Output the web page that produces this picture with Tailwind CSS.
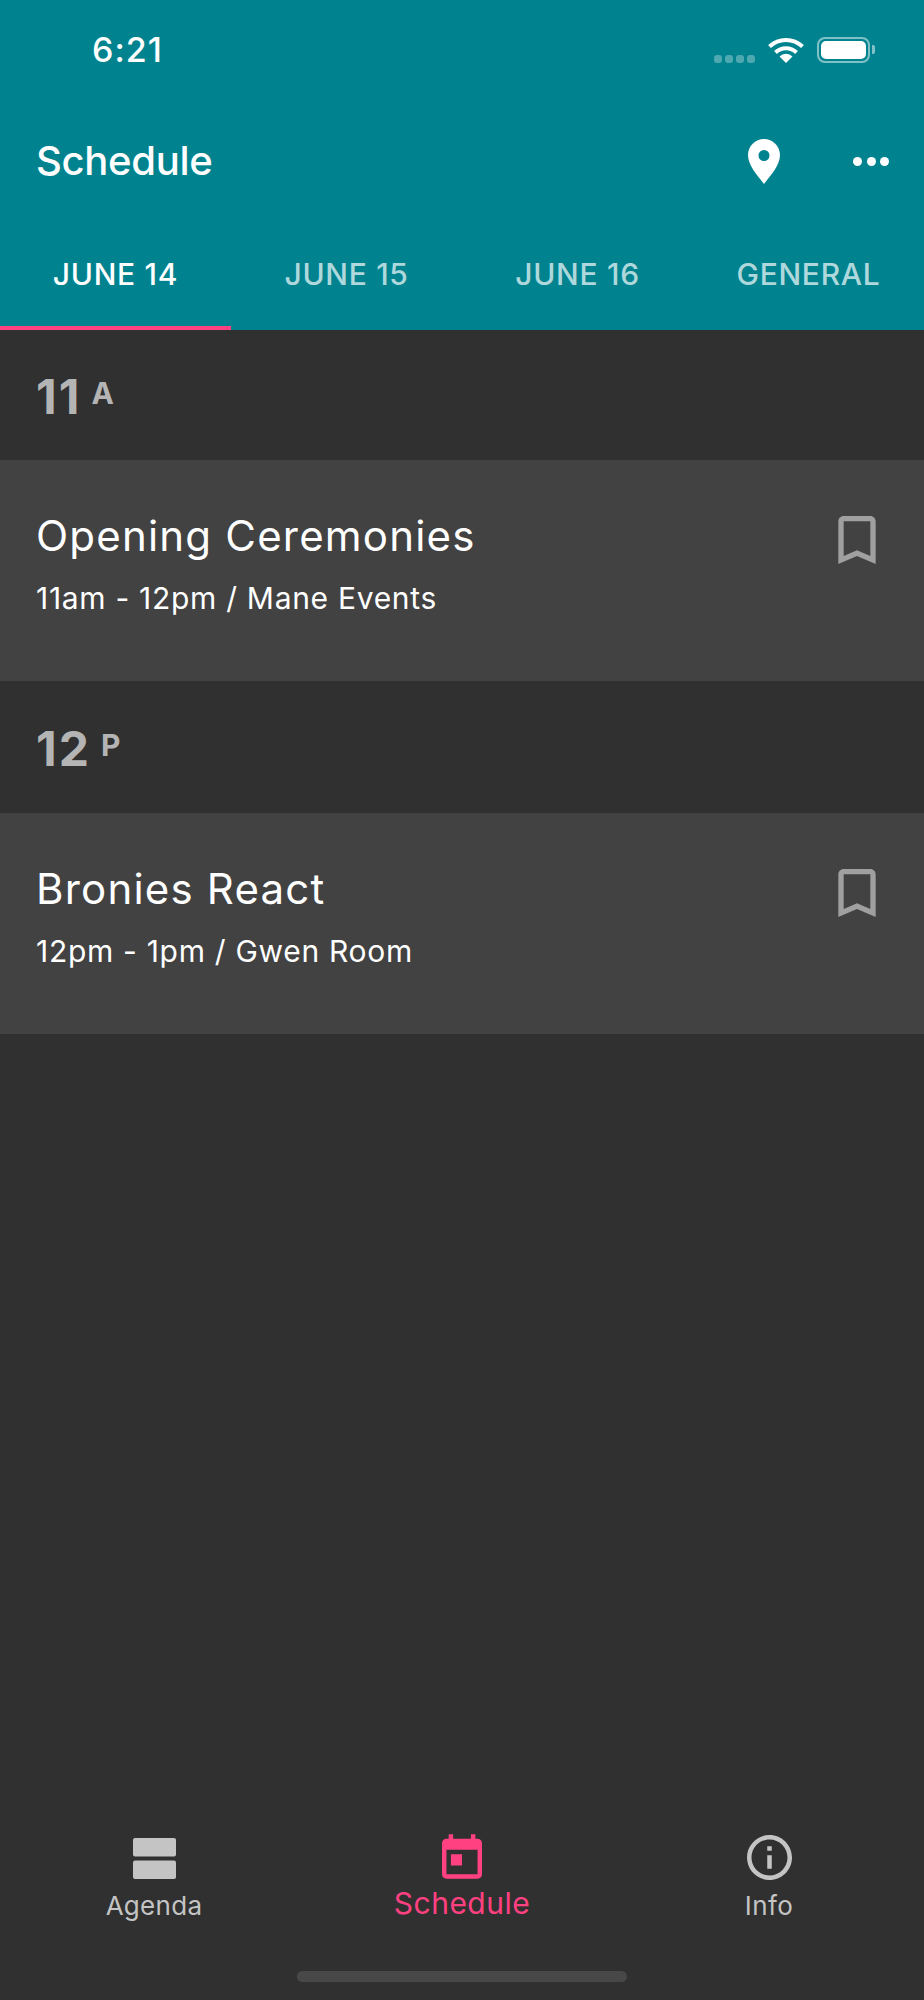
<!DOCTYPE html>
<html lang="en">
<head>
<meta charset="UTF-8" />
<title>Schedule</title>
<script src="https://cdn.jsdelivr.net/npm/@tailwindcss/browser@4"></script>
</head>
<body class="bg-[#303030] font-['Inter','Liberation_Sans',sans-serif]">
<div class="w-[924px] h-[2000px] flex flex-col overflow-hidden">

  <!-- header -->
  <header class="bg-[#00838f] text-white">
    <div class="h-[99px] flex items-center justify-between pl-[92px] pr-[49px]">
      <span class="text-[34px] font-medium leading-none tracking-[1px] mt-[1px]">6:21</span>
      <div class="flex items-center">
        <div class="flex gap-[3px] mt-[19px] mr-[13px]">
          <span class="w-[8px] h-[8px] rounded-[3px] bg-white/30"></span>
          <span class="w-[8px] h-[8px] rounded-[3px] bg-white/30"></span>
          <span class="w-[8px] h-[8px] rounded-[3px] bg-white/30"></span>
          <span class="w-[8px] h-[8px] rounded-[3px] bg-white/30"></span>
        </div>
        <svg class="w-[36px] h-[26px] mr-[13px]" viewBox="0 0 36 26" fill="none">
          <path d="M1.5 9.5A24 24 0 0 1 34.5 9.5" stroke="#fff" stroke-width="4" />
          <path d="M7.5 15.5A15 15 0 0 1 28.5 15.5" stroke="#fff" stroke-width="4" />
          <path d="M18 26L11.5 19.5A9 9 0 0 1 24.5 19.5Z" fill="#fff" />
        </svg>
        <div class="w-[53px] h-[26px] rounded-[8px] border-2 border-white/50 p-[2px]">
          <div class="w-full h-full rounded-[5px] bg-white"></div>
        </div>
        <span class="w-[3px] h-[9px] ml-[2px] rounded-r-[2px] bg-white/50"></span>
      </div>
    </div>
    <div class="h-[124px] flex items-center pl-[36px] pr-[35px]">
      <h1 class="text-[40px] font-medium leading-none tracking-[-0.3px] flex-1">Schedule</h1>
      <svg class="w-[32px] h-[45px] mr-[73px]" viewBox="0 0 32 45">
        <path fill="#fff" fill-rule="evenodd" d="M16 0C7.2 0 0 7 0 16c0 10 9 20 16 29 7-9 16-19 16-29C32 7 24.800 0 16 0zm0 11a5.500 5.500 0 1 1 0 11 5.500 5.500 0 0 1 0-11z" />
      </svg>
      <div class="flex gap-[4.500px]">
        <span class="w-[9px] h-[9px] rounded-full bg-white"></span>
        <span class="w-[9px] h-[9px] rounded-full bg-white"></span>
        <span class="w-[9px] h-[9px] rounded-full bg-white"></span>
      </div>
    </div>
    <nav class="h-[107px] grid grid-cols-4 text-[30px] font-medium leading-none tracking-[0.7px]">
      <div class="flex items-center justify-center border-b-4 border-[#ff4081] pb-[2px]">JUNE 14</div>
      <div class="flex items-center justify-center border-b-4 border-transparent pb-[2px] text-white/70">JUNE 15</div>
      <div class="flex items-center justify-center border-b-4 border-transparent pb-[2px] text-white/70">JUNE 16</div>
      <div class="flex items-center justify-center border-b-4 border-transparent pb-[2px] text-white/70">GENERAL</div>
    </nav>
  </header>

  <!-- schedule list -->
  <main class="flex-1">
    <div class="h-[130px] flex items-start pl-[36px] pt-[38px] text-[#b4b4b4] font-bold">
      <span class="text-[48px] leading-[58px] tracking-[2px]">11</span>
      <span class="text-[30px] leading-[36px] ml-[10px] mt-[7px]">A</span>
    </div>
    <div class="h-[221px] bg-[#424242] flex justify-between pl-[36px] pr-[48px] pt-[51px] text-white">
      <div>
        <div class="text-[42px] leading-[50px] tracking-[1.2px]">Opening Ceremonies</div>
        <div class="text-[30px] leading-[36px] mt-[19px] tracking-[0.7px]">11am - 12pm / Mane Events</div>
      </div>
      <svg class="w-[38px] h-[48px] mt-[5px]" viewBox="5 3 14 18" fill="#a0a0a0">
        <path d="M17 3H7c-1.100 0-2 .9-2 2v16l7-3 7 3V5c0-1.100-.9-2-2-2zm0 15l-5-2.180L7 18V5h10v13z" />
      </svg>
    </div>
    <div class="h-[132px] flex items-start pl-[36px] pt-[39px] text-[#b4b4b4] font-bold">
      <span class="text-[48px] leading-[58px] tracking-[2px]">12</span>
      <span class="text-[30px] leading-[36px] ml-[10px] mt-[7px]">P</span>
    </div>
    <div class="h-[221px] bg-[#424242] flex justify-between pl-[36px] pr-[48px] pt-[51px] text-white">
      <div>
        <div class="text-[42px] leading-[50px] tracking-[1.2px]">Bronies React</div>
        <div class="text-[30px] leading-[36px] mt-[19px] tracking-[0.7px]">12pm - 1pm / Gwen Room</div>
      </div>
      <svg class="w-[38px] h-[48px] mt-[5px]" viewBox="5 3 14 18" fill="#a0a0a0">
        <path d="M17 3H7c-1.100 0-2 .9-2 2v16l7-3 7 3V5c0-1.100-.9-2-2-2zm0 15l-5-2.180L7 18V5h10v13z" />
      </svg>
    </div>
  </main>

  <!-- bottom tabs -->
  <footer class="h-[172px] relative">
    <div class="grid grid-cols-3 pt-[6px]">
      <div class="flex flex-col items-center text-[#c4c4c4]">
        <svg class="w-[43px] h-[41px] mt-[4px]" viewBox="0 0 43 41" fill="#c4c4c4">
          <rect x="0" y="0" width="43" height="18.500" rx="2" />
          <rect x="0" y="22.500" width="43" height="18.500" rx="2" />
        </svg>
        <span class="text-[26px] leading-[32px] mt-[11px] tracking-[0.3px]">Agenda</span>
      </div>
      <div class="flex flex-col items-center text-[#ff4081]">
        <svg class="w-[40px] h-[45px]" viewBox="3 2 18 20" fill="#ff4081">
          <path d="M19 4h-1V2h-2v2H8V2H6v2H5c-1.110 0-1.990.9-1.990 2L3 20c0 1.100.89 2 2 2h14c1.100 0 2-.9 2-2V6c0-1.100-.9-2-2-2zm0 16H5V9h14v11zM7 11h5v5H7z" />
        </svg>
        <span class="text-[30px] leading-[36px] mt-[6px] tracking-[0.5px]">Schedule</span>
      </div>
      <div class="flex flex-col items-center text-[#c4c4c4] pr-[2px]">
        <svg class="w-[45px] h-[45px] mt-[1px]" viewBox="2 2 20 20" fill="#c4c4c4">
          <path d="M11 7h2v2h-2zm0 4h2v6h-2zm1-9C6.480 2 2 6.480 2 12s4.480 10 10 10 10-4.480 10-10S17.520 2 12 2zm0 18c-4.410 0-8-3.590-8-8s3.590-8 8-8 8 3.590 8 8-3.590 8-8 8z" />
        </svg>
        <span class="text-[26px] leading-[32px] mt-[10px] tracking-[0.4px]">Info</span>
      </div>
    </div>
    <div class="absolute left-[297px] bottom-[18px] w-[330px] h-[11px] rounded-full bg-[#484848]"></div>
  </footer>
</div>
</body>
</html>
